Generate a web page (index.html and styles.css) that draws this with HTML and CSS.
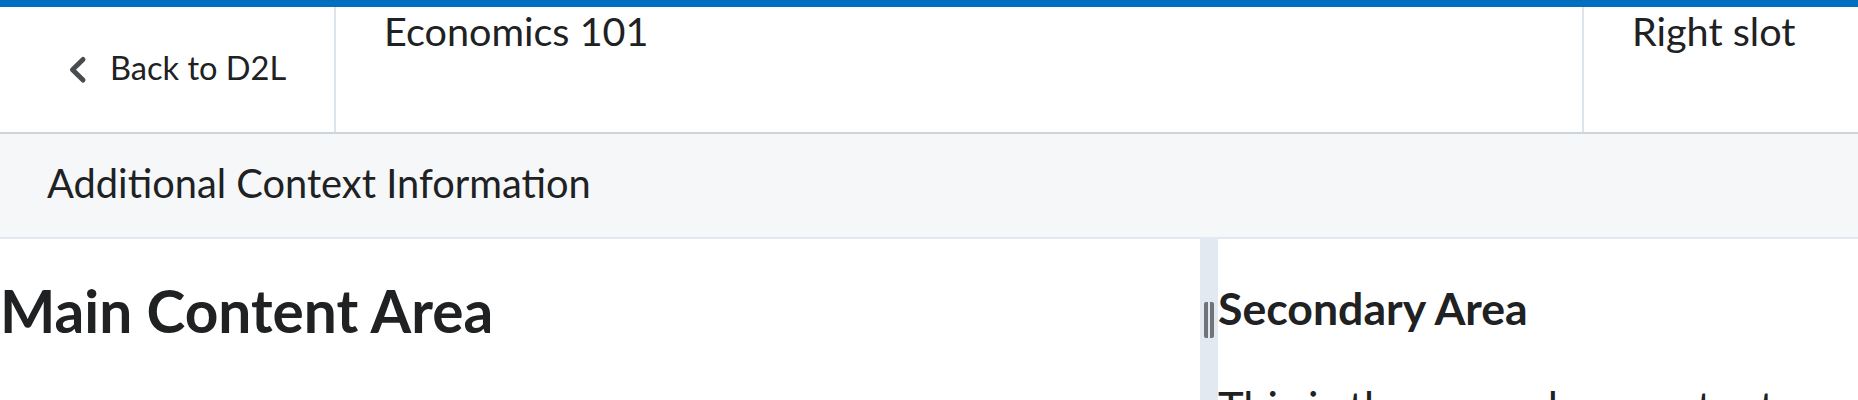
FILE: index.html
```html
<!DOCTYPE html>
<html lang="en">
<head>
<meta charset="utf-8">
<title>Economics 101</title>
<link rel="stylesheet" href="styles.css">
</head>
<body>
<div class="topbar"></div>
<header class="header">
  <div class="back">
    <svg class="chevron" width="20" height="30" viewBox="0 0 20 30" aria-hidden="true">
      <polyline points="15,4.5 4.5,14.8 15,25" fill="none" stroke="#494c4e" stroke-width="5" stroke-linecap="round" stroke-linejoin="round"/>
    </svg>
    <span class="back-text">Back to D2L</span>
  </div>
  <div class="title">Economics 101</div>
  <div class="right-slot">Right slot</div>
</header>
<div class="context">Additional Context Information</div>
<div class="layout">
  <main class="main">
    <h1 class="main-heading">Main Content Area</h1>
  </main>
  <div class="resizer"><div class="grip"></div></div>
  <aside class="secondary">
    <h2 class="secondary-heading">Secondary Area</h2>
    <p class="secondary-text">This is the secondary content area.</p>
  </aside>
</div>
</body>
</html>
```
FILE: styles.css
```css
html, body {
  margin: 0;
  padding: 0;
}
body {
  font-family: Lato, "Open Sans", sans-serif;
  color: #202122;
  background: #ffffff;
  overflow: hidden;
}
.topbar {
  height: 7px;
  background: #006fbf;
}
.header {
  display: flex;
  height: 125px;
  border-bottom: 2px solid #cdd5dc;
}
.back {
  width: 266px;
  padding-left: 68px;
  display: flex;
  align-items: center;
  border-right: 2px solid #dde4ec;
}
.chevron {
  display: block;
  flex: none;
}
.back-text {
  font-size: 32.6px;
  line-height: 1.2;
  margin-left: 22px;
  margin-top: -4px;
}
.title {
  flex: 1;
  padding-left: 48px;
  font-size: 39.6px;
  line-height: 1.2;
  border-right: 2px solid #dde4ec;
}
.right-slot {
  width: 226px;
  padding-left: 48px;
  font-size: 39.6px;
  line-height: 1.2;
}
.context {
  box-sizing: border-box;
  height: 105px;
  display: flex;
  align-items: center;
  padding-left: 47px;
  padding-bottom: 6px;
  background: #f6f7f9;
  border-bottom: 2px solid #e3e9f1;
  font-size: 39.8px;
  line-height: 1.2;
}
.layout {
  display: flex;
  height: 161px;
}
.main {
  width: 1200px;
}
.main-heading {
  margin: 35.7px 0 0 0;
  font-size: 58.6px;
  font-weight: 700;
  line-height: 1.2;
}
.resizer {
  width: 18px;
  background: #e3e9f1;
  position: relative;
}
.grip {
  position: absolute;
  left: 4px;
  top: 63px;
  width: 2px;
  height: 36px;
  border-left: 4px solid #6e7477;
  border-right: 4px solid #6e7477;
  border-radius: 2px;
}
.secondary {
  flex: 1;
}
.secondary-heading {
  margin: 42px 0 0 0;
  font-size: 44.6px;
  font-weight: 700;
  line-height: 1.2;
}
.secondary-text {
  margin: 46.7px 0 0 0;
  font-size: 43.5px;
  line-height: 1.2;
}
```
